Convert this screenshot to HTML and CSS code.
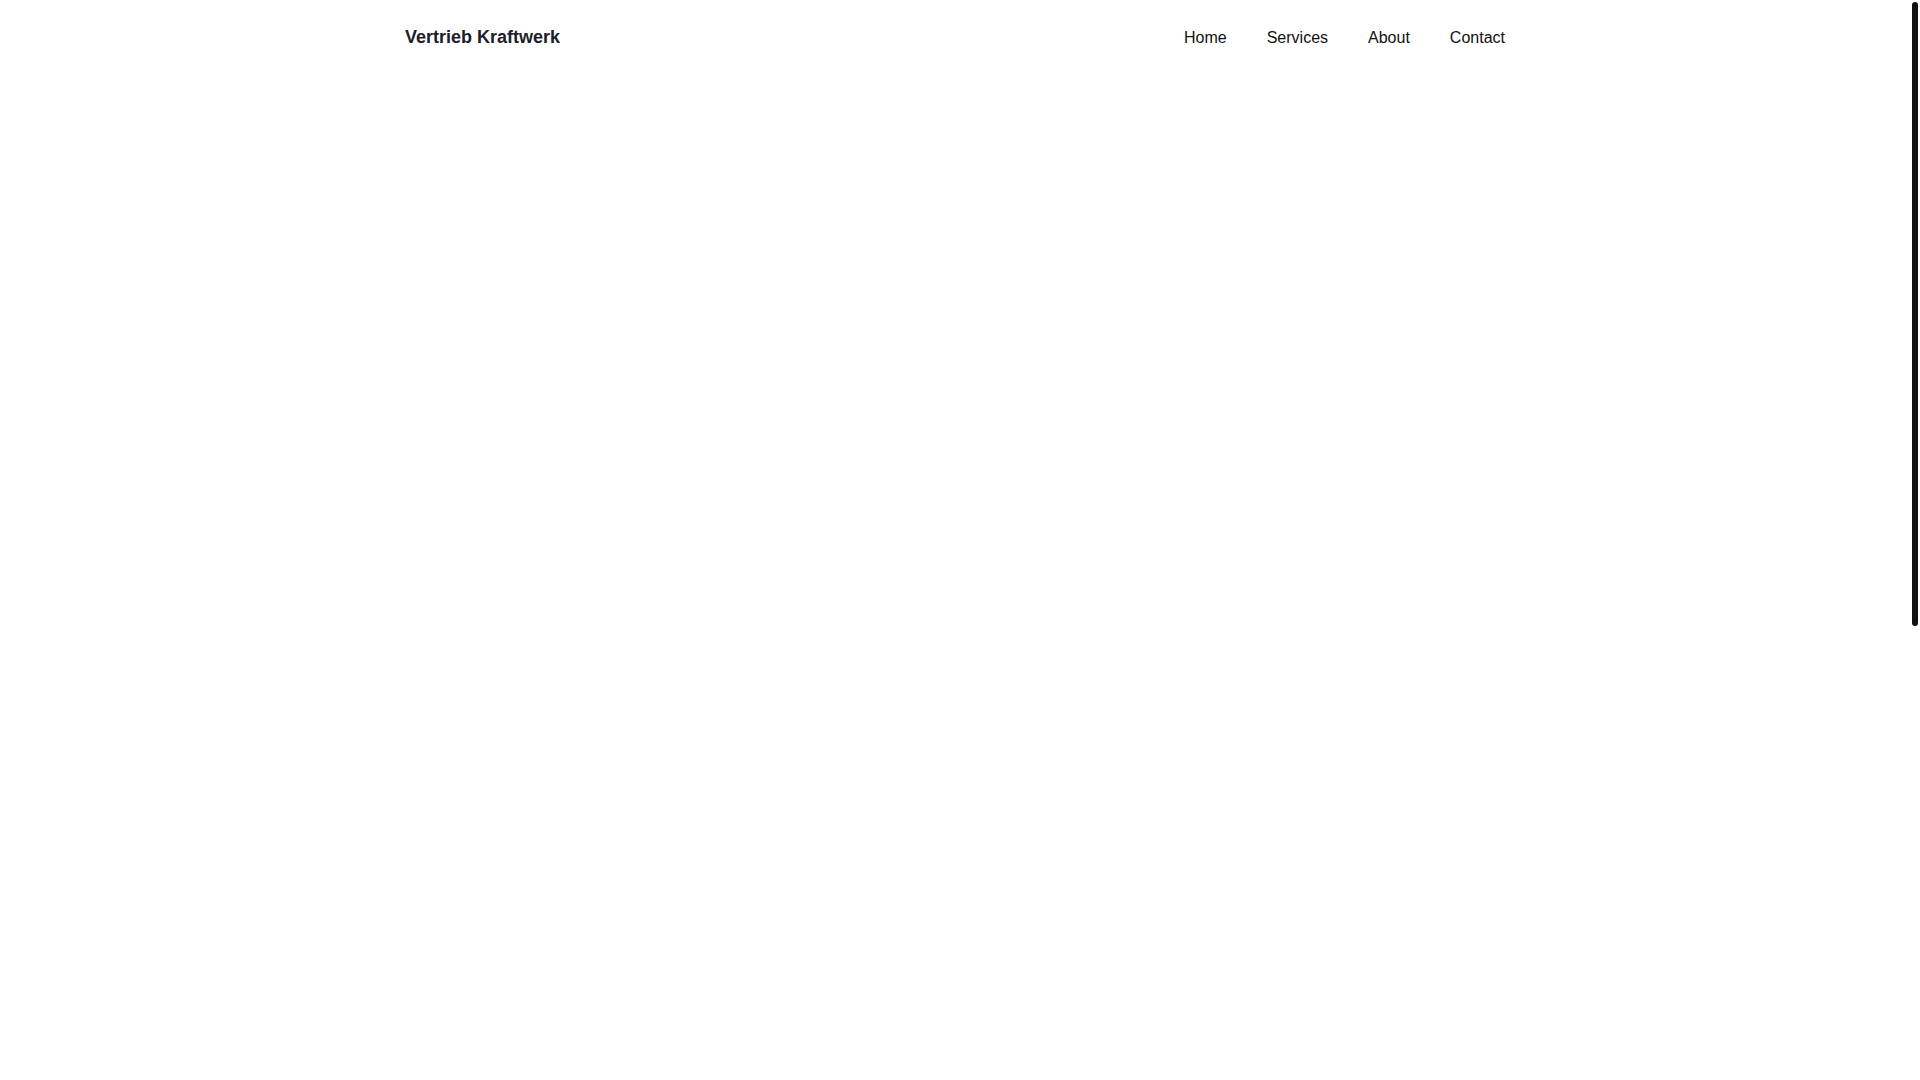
FILE: index.html
```html
<!DOCTYPE html>
<html lang="de">
<head>
<meta charset="utf-8">
<title>Vertrieb Kraftwerk</title>
<link rel="stylesheet" href="styles.css">
</head>
<body>
<header class="site-header">
  <div class="container header-inner">
    <a class="logo" href="#">Vertrieb Kraftwerk</a>
    <nav class="main-nav">
      <a href="#">Home</a>
      <a href="#">Services</a>
      <a href="#">About</a>
      <a href="#">Contact</a>
    </nav>
  </div>
</header>
<main class="page-body"></main>
<div class="scroll-thumb" aria-hidden="true"></div>
</body>
</html>
```

FILE: styles.css
```css
html {
  background: #ffffff;
  scrollbar-width: none;
}
::-webkit-scrollbar {
  width: 0;
  height: 0;
}
body {
  margin: 0;
  padding-right: 10px;
  font-family: "Liberation Sans", Arial, sans-serif;
  color: #111111;
  background: #ffffff;
}
.container {
  max-width: 1100px;
  margin: 0 auto;
}
.header-inner {
  display: flex;
  align-items: center;
  justify-content: space-between;
  height: 74px;
}
.logo {
  font-size: 18px;
  font-weight: 700;
  color: #1c2128;
  text-decoration: none;
}
.main-nav {
  display: flex;
  gap: 40px;
  padding-top: 2px;
}
.main-nav a {
  font-size: 16px;
  color: #111111;
  text-decoration: none;
}
.page-body {
  height: 1795px;
}
.scroll-thumb {
  position: fixed;
  top: 2px;
  right: 2px;
  width: 6px;
  height: 624px;
  border-radius: 3px;
  background: #111111;
}
```
